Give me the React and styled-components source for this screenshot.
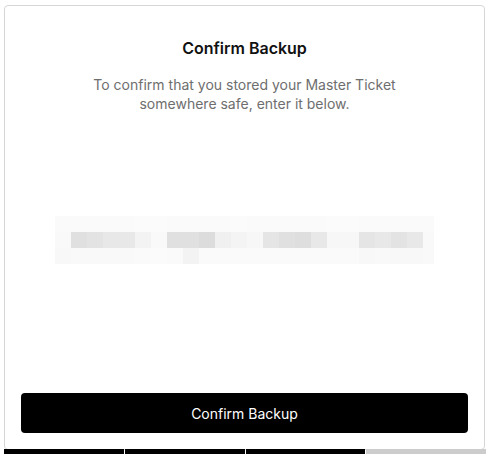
import styled, { createGlobalStyle } from "styled-components";

const GlobalStyle = createGlobalStyle`
  body {
    margin: 0;
    background: #ffffff;
    font-family: Inter, "Noto Sans", sans-serif;
  }
`;

const Page = styled.div`
  width: 482px;
  padding: 5px 0 0 4px;
  display: flex;
  flex-direction: column;
`;

const Card = styled.div`
  box-sizing: border-box;
  width: 481px;
  height: 445px;
  border: 1px solid #d6d6d6;
  border-radius: 4px;
  padding: 16px;
  display: flex;
  flex-direction: column;
  align-items: center;
`;

const Title = styled.h1`
  margin: 15px 0 0;
  font-size: 16px;
  line-height: 22px;
  font-weight: 600;
  color: #111111;
`;

const Subtitle = styled.p`
  margin: 16px 0 0;
  width: 320px;
  text-align: center;
  font-size: 14px;
  line-height: 19px;
  color: #6e6e6e;
`;

const Mosaic = styled.div`
  margin-top: 103px;
  margin-left: -1px;
  display: grid;
  grid-template-columns: repeat(23, 16px) 11px;
  grid-auto-rows: 16px;
`;

const Cell = styled.div`
  background: ${(p) => p.$shade};
`;

const Spacer = styled.div`
  flex: 1;
`;

const Button = styled.button`
  width: 100%;
  height: 40px;
  border: none;
  border-radius: 4px;
  background: #000000;
  color: #ffffff;
  font-family: Inter, "Noto Sans", sans-serif;
  font-size: 14px;
  cursor: pointer;
`;

const Progress = styled.div`
  display: flex;
  gap: 1px;
  height: 5px;
  margin-top: -1px;
`;

const Segment = styled.div`
  flex: 1;
  background: ${(p) => (p.$done ? "#000000" : "#cccccc")};
`;

const rows = [
  ["#fafafa", "#fafafa", "#fafafa", "#fafafa", "#fafafa", "#fbfbfb", "#fbfbfb", "#fafafa", "#fafafa", "#fafafa", "#fafafa", "#fbfbfb", "#fafafa", "#fafafa", "#fafafa", "#fafafa", "#fafafa", "#fbfbfb", "#fbfbfb", "#fafafa", "#fafafa", "#fafafa", "#fafafa", "#fafafa"],
  ["#f9f9f9", "#e0e0e0", "#e3e3e3", "#e8e8e8", "#e8e8e8", "#f3f3f3", "#f9f9f9", "#e0e0e0", "#e0e0e0", "#dcdcdc", "#f0f0f0", "#f4f4f4", "#f7f7f7", "#e5e5e5", "#e0e0e0", "#dedede", "#e8e8e8", "#f7f7f7", "#f7f7f7", "#e5e5e5", "#e8e8e8", "#e3e3e3", "#e8e8e8", "#f9f9f9"],
  ["#f8f8f8", "#f9f9f9", "#f9f9f9", "#f9f9f9", "#f9f9f9", "#fafafa", "#fbfbfb", "#fafafa", "#f3f3f3", "#fafafa", "#fafafa", "#fafafa", "#fafafa", "#fafafa", "#fafafa", "#fafafa", "#fafafa", "#fafafa", "#fafafa", "#f8f8f8", "#f9f9f9", "#f8f8f8", "#f8f8f8", "#f9f9f9"],
];

const steps = [true, true, true, false];

export default function App() {
  return (
    <>
      <GlobalStyle />
      <Page>
        <Card>
          <Title>Confirm Backup</Title>
          <Subtitle>
            To confirm that you stored your Master Ticket somewhere safe, enter it below.
          </Subtitle>
          <Mosaic aria-label="Master Ticket input">
            {rows.map((row, r) =>
              row.map((shade, c) => <Cell key={`${r}-${c}`} $shade={shade} />)
            )}
          </Mosaic>
          <Spacer />
          <Button>Confirm Backup</Button>
        </Card>
        <Progress>
          {steps.map((done, i) => (
            <Segment key={i} $done={done} />
          ))}
        </Progress>
      </Page>
    </>
  );
}
